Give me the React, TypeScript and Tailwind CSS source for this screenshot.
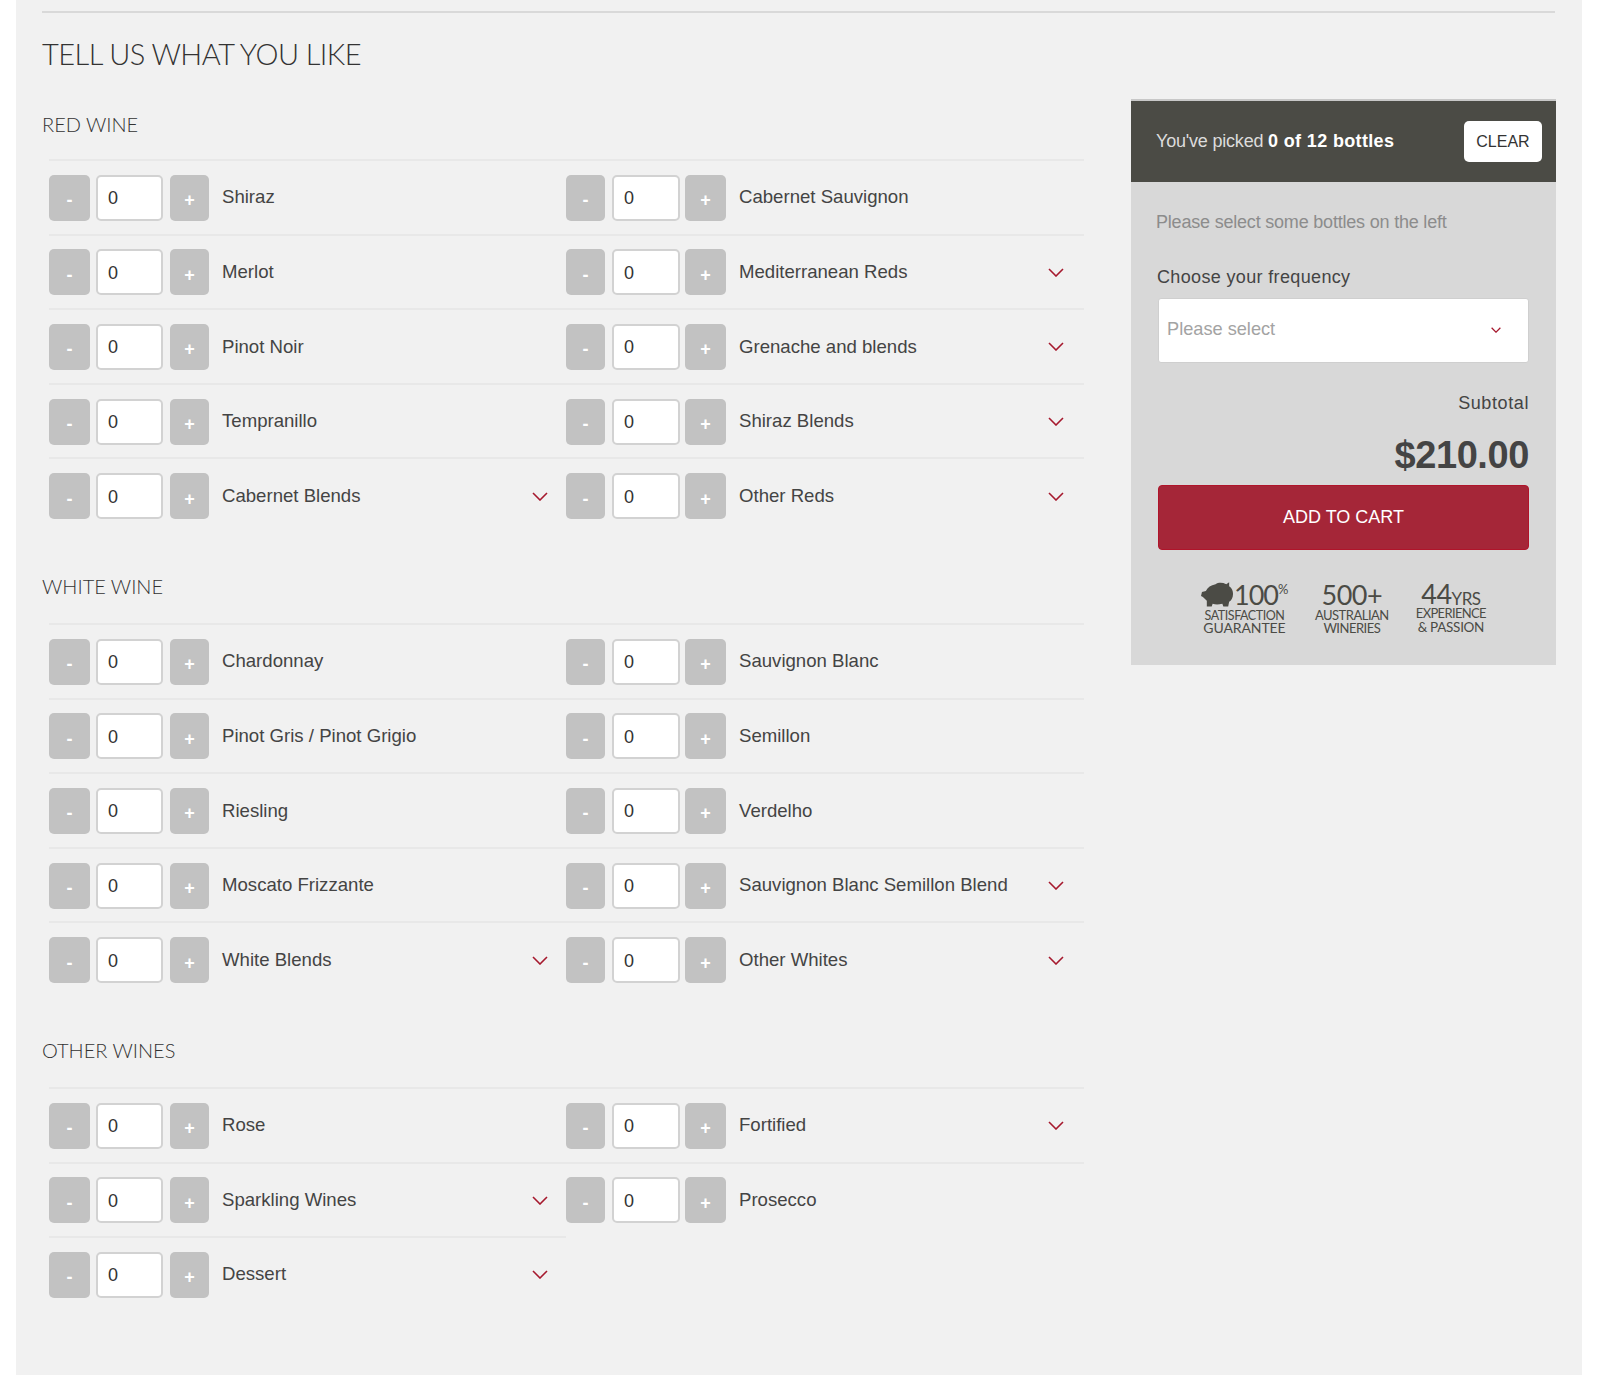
import React from 'react';

interface Wine {
  name: string;
  more?: boolean;
}

interface Section {
  title: string;
  wines: Wine[];
}

const sections: Section[] = [
  {
    title: 'RED WINE',
    wines: [
      { name: 'Shiraz' },
      { name: 'Cabernet Sauvignon' },
      { name: 'Merlot' },
      { name: 'Mediterranean Reds', more: true },
      { name: 'Pinot Noir' },
      { name: 'Grenache and blends', more: true },
      { name: 'Tempranillo' },
      { name: 'Shiraz Blends', more: true },
      { name: 'Cabernet Blends', more: true },
      { name: 'Other Reds', more: true },
    ],
  },
  {
    title: 'WHITE WINE',
    wines: [
      { name: 'Chardonnay' },
      { name: 'Sauvignon Blanc' },
      { name: 'Pinot Gris / Pinot Grigio' },
      { name: 'Semillon' },
      { name: 'Riesling' },
      { name: 'Verdelho' },
      { name: 'Moscato Frizzante' },
      { name: 'Sauvignon Blanc Semillon Blend', more: true },
      { name: 'White Blends', more: true },
      { name: 'Other Whites', more: true },
    ],
  },
  {
    title: 'OTHER WINES',
    wines: [
      { name: 'Rose' },
      { name: 'Fortified', more: true },
      { name: 'Sparkling Wines', more: true },
      { name: 'Prosecco' },
      { name: 'Dessert', more: true },
    ],
  },
];

const Chevron: React.FC<{ small?: boolean }> = ({ small }) => (
  <svg
    viewBox="0 0 16 9"
    className={small ? 'w-[10px] h-[6px]' : 'w-[16px] h-[9px]'}
    fill="none"
    stroke="#a6192e"
    strokeWidth={small ? 2 : 1.6}
  >
    <polyline points="1,1 8,8 15,1" />
  </svg>
);

const StepButton: React.FC<{ label: string; className: string }> = ({ label, className }) => (
  <button className={`h-[46px] rounded-[5px] bg-[#c2c2c2] text-white text-[18px] font-bold pt-[5px] leading-none ${className}`}>
    {label}
  </button>
);

const WineRow: React.FC<{ wine: Wine; left: boolean }> = ({ wine, left }) => (
  <div className="h-[74.6px] border-t-2 border-[#e8e8e8] pt-[1px] flex items-center">
    <StepButton label="-" className={left ? 'w-[41px]' : 'w-[39px]'} />
    <input
      readOnly
      value="0"
      className={`h-[46px] rounded-[5px] border-2 border-[#d2d2d2] bg-white pl-[10px] pt-[2px] text-[18px] text-[#333] ${
        left ? 'w-[67px] ml-[6px] mr-[7px]' : 'w-[68px] ml-[7px] mr-[5px]'
      }`}
    />
    <StepButton label="+" className={left ? 'w-[39px]' : 'w-[41px]'} />
    <span className="ml-[13px] pb-[1px] text-[18.6px] text-[#444]">{wine.name}</span>
    {wine.more && (
      <span className={`ml-auto ${left ? 'mr-[18px]' : 'mr-[20px]'}`}>
        <Chevron />
      </span>
    )}
  </div>
);

const Badge: React.FC<{
  big: React.ReactNode;
  lines: [string, string];
  sizes: [string, string];
  className?: string;
}> = ({ big, lines, sizes, className }) => (
  <div className={`flex flex-col items-center text-[#4b4b45] font-['Lato',sans-serif] leading-none ${className ?? ''}`}>
    <div className="h-[27px] flex items-end text-[27px] tracking-[-0.5px]">{big}</div>
    <div className={sizes[0]}>{lines[0]}</div>
    <div className={sizes[1]}>{lines[1]}</div>
  </div>
);

export default function App() {
  return (
    <div className="bg-white h-[1393px] pl-[16px] pr-[18px] font-['Liberation_Sans',Arial,sans-serif]">
      <div className="bg-[#f1f1f1] h-[1375px] pl-[26px] pr-[26px] pt-[11px]">
        <div className="border-t-2 border-[#d9d9d9] h-[57px] pt-[23px] mr-[1px]">
          <h1 className="font-['Lato',sans-serif] font-light text-[29px] leading-[36px] text-[#333] tracking-[-0.55px]">
            TELL US WHAT YOU LIKE
          </h1>
        </div>
        <div className="flex items-start">
          <div className="w-[1042px] shrink-0">
            {sections.map((section, i) => (
              <section key={section.title}>
                <h2
                  className={`h-[91px] font-['Lato',sans-serif] font-light text-[20px] leading-[26px] text-[#333] ${
                    i === 0 ? 'pt-[43px]' : 'pt-[41px]'
                  }`}
                >
                  {section.title}
                </h2>
                <div className="ml-[7px] grid grid-cols-[517px_518px]">
                  {section.wines.map((wine, n) => (
                    <WineRow key={wine.name} wine={wine} left={n % 2 === 0} />
                  ))}
                </div>
              </section>
            ))}
          </div>
          <aside className="ml-[47px] mt-[31px] w-[425px] h-[566px] bg-[#d8d8d8]">
            <div className="h-[83px] bg-[#4b4b45] border-t-2 border-[#c8c8c8] flex items-center pl-[25px] pr-[14px]">
              <p className="text-[18px] text-[#dcdcdc] tracking-[-0.2px]">
                You've picked <b className="text-white tracking-[0.35px]">0 of 12 bottles</b>
              </p>
              <button className="ml-auto w-[78px] h-[41px] rounded-[5px] bg-white text-[16px] text-[#333]">CLEAR</button>
            </div>
            <div className="pl-[27px] pr-[27px]">
              <p className="mt-[29px] -ml-[2px] text-[18px] leading-[22px] text-[#8c8c8c] tracking-[-0.2px]">
                Please select some bottles on the left
              </p>
              <p className="mt-[33px] -ml-[1px] text-[18px] leading-[22px] text-[#444] tracking-[0.35px]">
                Choose your frequency
              </p>
              <div className="mt-[10px] h-[65px] rounded-[3px] border border-[#cfcfcf] bg-white flex items-center pl-[8px] pr-[27px] pb-[2px]">
                <span className="text-[18.2px] text-[#a3a3a3]">Please select</span>
                <span className="ml-auto">
                  <Chevron small />
                </span>
              </div>
              <p className="mt-[29px] text-right text-[18px] leading-[22px] text-[#444] tracking-[0.6px]">Subtotal</p>
              <p className="mt-[20px] text-right text-[38px] leading-[42px] font-bold text-[#444] tracking-[-0.4px]">
                $210.00
              </p>
              <button className="mt-[9px] w-full h-[65px] rounded-[4px] bg-[#a52638] border border-[#b0142a] text-white text-[18px]">
                ADD TO CART
              </button>
              <div className="mt-[31px] flex justify-center gap-x-[27px]">
                <Badge
                  big={
                    <>
                      <svg viewBox="0 0 34 26" className="w-[33px] h-[26px] mb-[1px]" fill="#4b4b45">
                        <path d="M1 11 L5 10 C7 6 10 4 15 3 C18 1 22 1 26 3 L29 1 L29 5 C32 7 33 10 33 13 C33 17 31 20 29 21 L28 26 L23 26 L22 23 C18 24 15 24 12 23 L11 26 L6 26 L6 20 C4 18 3 17 2 16 L0 15 Z" />
                      </svg>
                      <span className="tracking-[-1px]">100</span>
                      <span className="text-[13px] self-start mt-[2px]">%</span>
                    </>
                  }
                  lines={['SATISFACTION', 'GUARANTEE']}
                  sizes={['mt-[2px] h-[11px] text-[12.5px] tracking-[-0.45px]', 'h-[14px] text-[14px] tracking-[-0.1px]']}
                />
                <Badge
                  big={<span>500+</span>}
                  lines={['AUSTRALIAN', 'WINERIES']}
                  sizes={['mt-[1px] h-[13px] text-[13px] tracking-[-0.5px]', 'h-[14px] text-[13px] tracking-[-0.5px]']}
                />
                <Badge
                  className="-mt-[1px]"
                  big={
                    <>
                      <span>44</span>
                      <span className="text-[17px]">YRS</span>
                    </>
                  }
                  lines={['EXPERIENCE', '& PASSION']}
                  sizes={['h-[14px] text-[13px] tracking-[-0.65px]', 'h-[14px] text-[13.5px] tracking-[-0.3px]']}
                />
              </div>
            </div>
          </aside>
        </div>
      </div>
    </div>
  );
}
